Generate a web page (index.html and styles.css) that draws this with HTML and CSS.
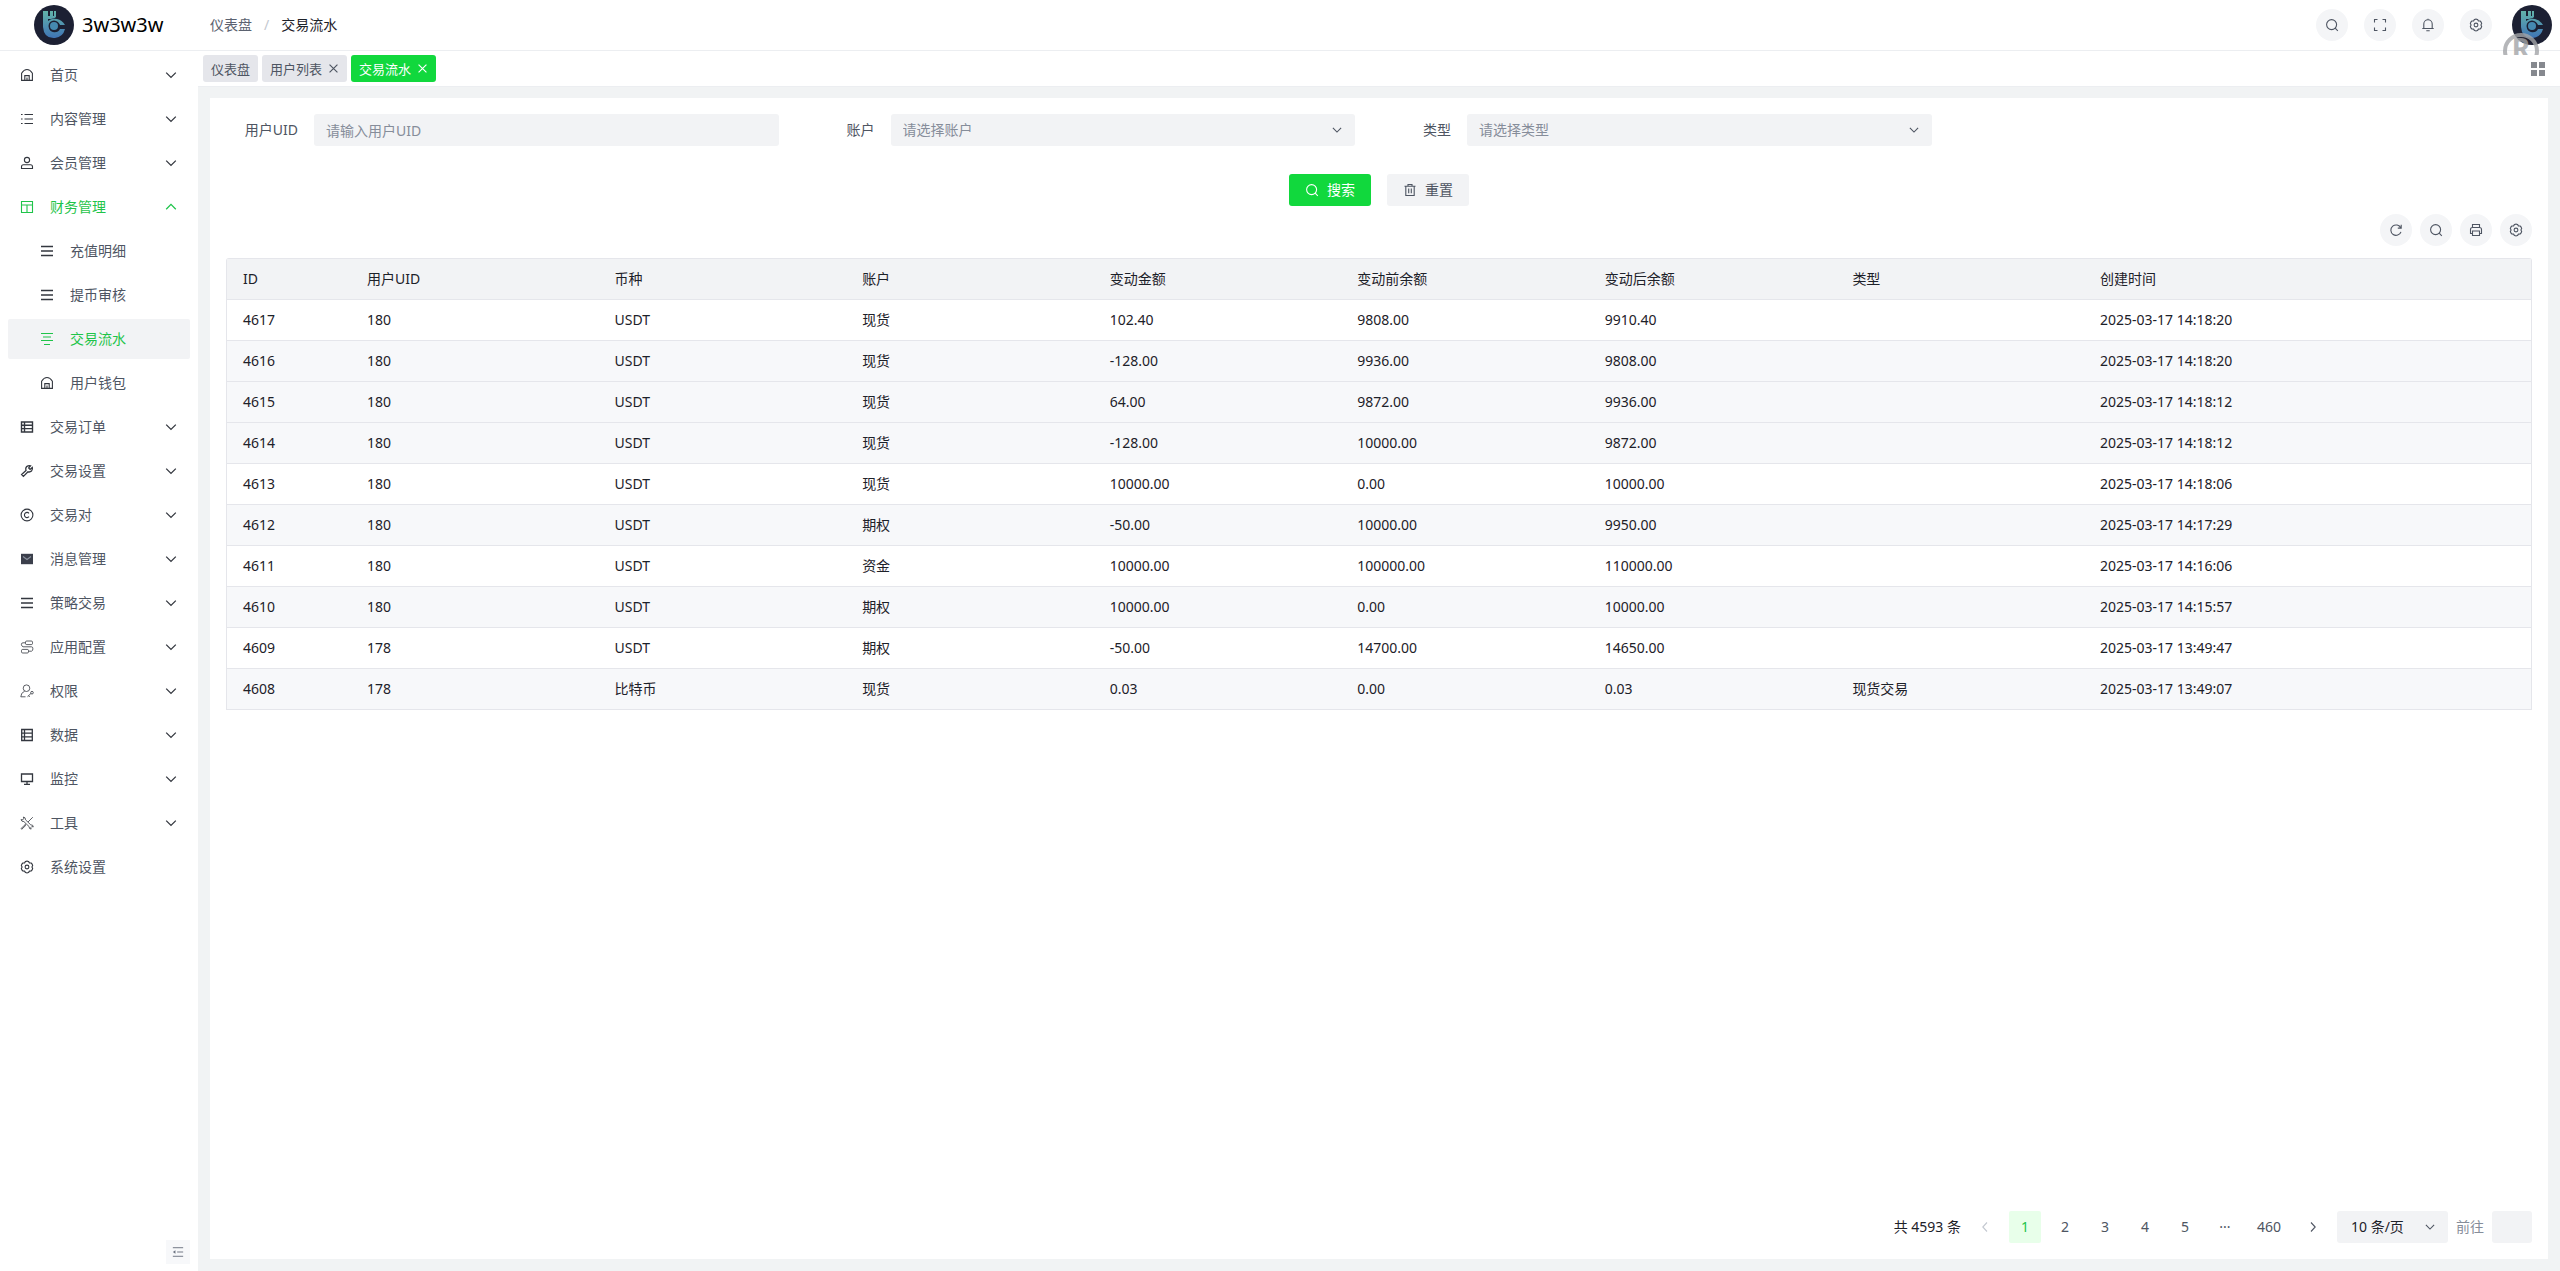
FILE: index.html
```html
<!DOCTYPE html>
<html lang="zh-CN">
<head>
  <meta charset="UTF-8">
  <meta name="viewport" content="width=device-width, initial-scale=1.0">
  <title>交易流水</title>
  <link rel="stylesheet" href="styles.css">
</head>
<body>
  <svg class="sprite" aria-hidden="true">
    <defs>
      <linearGradient id="logo-fill" x1="0" y1="0" x2="0" y2="1">
        <stop offset="0" stop-color="#62b3aa"/>
        <stop offset="1" stop-color="#3f74b5"/>
      </linearGradient>
    </defs>
    <symbol id="i-logo" viewBox="0 0 40 40">
      <circle cx="20" cy="20" r="20" fill="#1c2033"/>
      <path fill="url(#logo-fill)" d="M9 6h5v5h2V6h3v5h1V6h2v6q-2 2-8 2v2q4-3 9-2 5 1 8 6h-5q-2-4-7-3-4 1-4 5t4 5q5 1 7-3h5q-2 8-10 9-11 1-12-11z"/>
      <circle cx="20" cy="21" r="5.500" fill="#1c2033"/>
      <circle cx="20" cy="21" r="4" fill="#4589b0"/>
    </symbol>
    <symbol id="i-home" viewBox="0 0 14 14"><path d="M1.600 12.400V5.200Q4 1.500 7 1.500t5.400 3.700v7.200zM4.800 12.400V7.600h4.400v4.800M7 9.500v3"/></symbol>
    <symbol id="i-list" viewBox="0 0 14 14"><path d="M4.500 2.500H13M4.500 7H13M4.500 11.500H13M1 2.500h1.600M1 7h1.600M1 11.500h1.600"/></symbol>
    <symbol id="i-user" viewBox="0 0 14 14"><circle cx="7" cy="4" r="2.600"/><path d="M1.500 12.500v-1.800q0-2 2-2h7q2 0 2 2v1.800z"/></symbol>
    <symbol id="i-layout" viewBox="0 0 14 14"><path d="M1.500 1.500h11v11h-11zM1.500 5h11M7 5v7.500"/></symbol>
    <symbol id="i-menu" viewBox="0 0 14 14"><path stroke-width="1.500" d="M1 2.500h12M1 7h12M1 11.500h12"/></symbol>
    <symbol id="i-flow" viewBox="0 0 14 14"><path d="M1 1.500h12M3 5h8M1 8.500h12M4 12.500h6"/></symbol>
    <symbol id="i-table" viewBox="0 0 14 14"><path stroke-width="1.400" d="M1.500 2h11v10h-11zM1.500 5.300h11M1.500 8.600h11M4.500 2v10"/></symbol>
    <symbol id="i-tool" viewBox="0 0 14 14"><path stroke-width="1.300" d="M6 6.500Q5 3 8 1.800q1.400-.5 2.600 0L8.700 3.900l1.400 1.500 2.200-1.900q.6 2-.8 3.500-1.500 1.400-3.500.8l-4.600 4.600-1.800-1.800z"/></symbol>
    <symbol id="i-copyright" viewBox="0 0 14 14"><circle cx="7" cy="7" r="5.900"/><path d="M9 5.300a2.600 2.600 0 1 0 0 3.400"/></symbol>
    <symbol id="i-mail" viewBox="0 0 14 14"><path d="M1 1.800h12v10.400H1z" fill="#3b3f4b" stroke="none"/><path stroke="#8d93a0" d="M3 4.500l4 3 4-3"/></symbol>
    <symbol id="i-config" viewBox="0 0 14 14"><rect x="5.500" y="1" width="7" height="3.600" rx="1.200"/><rect x="1.500" y="9.400" width="7" height="3.600" rx="1.200"/><path d="M5.500 2.800H3Q1.400 2.800 1.400 4.400T3 6.800h8.500q1.400 0 1.400 2t-1.400 2.400h-3"/></symbol>
    <symbol id="i-auth" viewBox="0 0 14 14"><circle cx="6.500" cy="4.200" r="3.300"/><path d="M4.600 7.200Q.8 8.800.8 12.800h4.700M7.500 12.700l3.500-3.300M8.500 11.700l1.300 1.300"/><circle cx="12" cy="8.700" r="1.300"/></symbol>
    <symbol id="i-data" viewBox="0 0 14 14"><path stroke-width="1.300" d="M1.700 1.500h10.600v11H1.700zM1.700 5.200h10.600M1.700 8.800h10.600M4.500 1.500v11"/></symbol>
    <symbol id="i-monitor" viewBox="0 0 14 14"><path stroke-width="1.300" d="M1.500 2h11v7.500h-11zM7 9.500v2.500M4 12.300h6"/></symbol>
    <symbol id="i-tools" viewBox="0 0 14 14"><path d="M1 3.600l1.800.2.900-1L3.400 1q2.300.3 2.100 2.800l5.300 5.100q2.400-.3 2.500 2l-1.500-.3-1 1 .3 1.500q-2.200-.1-2-2.500L3.900 5.600Q1.500 5.800 1 3.600zM12.800 1.200L8 6M6 7.800L4.600 9.200M4.800 9L1 12.600l.7.700 3.900-3.700z"/></symbol>
    <symbol id="i-gear" viewBox="0 0 14 14"><circle cx="7" cy="7" r="1.900"/><path stroke-linejoin="round" d="M5.500 1.400Q7 .9 8.500 1.400l.9 1.500 1.800.1q1.100.9 1.500 2.600l-.8 1.400.8 1.400q-.4 1.700-1.500 2.600l-1.800.1-.9 1.500q-1.500.5-3 0l-.9-1.500-1.800-.1Q1.700 10.100 1.300 8.400L2.100 7l-.8-1.400Q1.700 3.900 2.800 3l1.800-.1z"/></symbol>
    <symbol id="i-down" viewBox="0 0 14 14"><path stroke-width="1.300" d="M2.200 4.600L7 9.400l4.800-4.800"/></symbol>
    <symbol id="i-up" viewBox="0 0 14 14"><path stroke-width="1.300" d="M2.200 9.200L7 4.400l4.800 4.800"/></symbol>
    <symbol id="i-left" viewBox="0 0 14 14"><path d="M9 2.500L4.800 7 9 11.500"/></symbol>
    <symbol id="i-right" viewBox="0 0 14 14"><path d="M5 2.500L9.200 7 5 11.500"/></symbol>
    <symbol id="i-close" viewBox="0 0 14 14"><path stroke-width="1.500" d="M2 2l10 10M12 2L2 12"/></symbol>
    <symbol id="i-search" viewBox="0 0 14 14"><circle cx="6.600" cy="6.600" r="5"/><path d="M10.200 10.200l2.600 2.600"/></symbol>
    <symbol id="i-full" viewBox="0 0 14 14"><path d="M1.500 4.500v-3h3M9.500 1.500h3v3M12.500 9.500v3h-3M4.500 12.500h-3v-3"/></symbol>
    <symbol id="i-bell" viewBox="0 0 14 14"><path d="M2.800 10.500V6a4.200 4.200 0 0 1 8.400 0v4.500M1.300 10.500h11.400M5.300 12.700h3.400M7 .8v1"/></symbol>
    <symbol id="i-refresh" viewBox="0 0 14 14"><path d="M11.800 5A5.200 5.200 0 1 0 12 8.800M12.200 1.800v3.300H8.800"/></symbol>
    <symbol id="i-print" viewBox="0 0 14 14"><path d="M3.500 4.500v-3h7v3M3.500 10.500h-2v-4q0-2 2-2h7q2 0 2 2v4h-2M3.500 8h7v4.500h-7z"/></symbol>
    <symbol id="i-trash" viewBox="0 0 14 14"><path d="M1.500 3.200h11M5 3V1.500h4V3M2.800 3.200v9.300h8.400V3.200M5.700 5.500v4.800M8.300 5.500v4.800"/></symbol>
    <symbol id="i-fold" viewBox="0 0 14 14"><path d="M1 2h12M6 7h7M1 12h12"/><path d="M1 7l3-2v4z" fill="currentColor" stroke="none"/></symbol>
    <symbol id="i-grid" viewBox="0 0 14 14"><path d="M0 0h6v6H0zM8 0h6v6H8zM0 8h6v6H0zM8 8h6v6H8z" fill="currentColor" stroke="none"/></symbol>
  </svg>

  <header class="header">
    <a class="brand" href="#"><svg class="avatar"><use href="#i-logo"/></svg><span>3w3w3w</span></a>
    <nav class="breadcrumb"><a href="#">仪表盘</a><i>/</i><strong>交易流水</strong></nav>
    <div class="header-tools">
      <button class="round" aria-label="搜索"><svg class="icon"><use href="#i-search"/></svg></button>
      <button class="round" aria-label="全屏"><svg class="icon"><use href="#i-full"/></svg></button>
      <button class="round" aria-label="通知"><svg class="icon"><use href="#i-bell"/></svg></button>
      <button class="round" aria-label="设置"><svg class="icon"><use href="#i-gear"/></svg></button>
      <a class="profile" href="#" aria-label="账号"><svg class="avatar"><use href="#i-logo"/></svg></a>
    </div>
    <div class="mark"><span>R</span></div>
  </header>

  <div class="layout">
    <aside class="sidebar">
      <nav class="menu" id="menu"></nav>
      <button class="fold" aria-label="收起"><svg class="icon"><use href="#i-fold"/></svg></button>
    </aside>

    <div class="main">
      <div class="tabs">
        <a class="tab" href="#">仪表盘</a>
        <a class="tab" href="#">用户列表<svg class="icon"><use href="#i-close"/></svg></a>
        <a class="tab active" href="#">交易流水<svg class="icon"><use href="#i-close"/></svg></a>
        <button class="tab-menu" aria-label="标签菜单"><svg class="icon"><use href="#i-grid"/></svg></button>
      </div>

      <main class="panel">
        <form class="search-form" onsubmit="return false">
          <div class="field">
            <label for="uid">用户UID</label>
            <input class="control" id="uid" type="text" placeholder="请输入用户UID">
          </div>
          <div class="field">
            <label for="account">账户</label>
            <div class="select">
              <select class="control" id="account"><option>请选择账户</option><option>现货</option><option>期权</option><option>资金</option></select>
              <svg class="icon"><use href="#i-down"/></svg>
            </div>
          </div>
          <div class="field">
            <label for="type">类型</label>
            <div class="select">
              <select class="control" id="type"><option>请选择类型</option><option>现货交易</option></select>
              <svg class="icon"><use href="#i-down"/></svg>
            </div>
          </div>
          <div class="actions">
            <button class="btn primary" type="submit"><svg class="icon"><use href="#i-search"/></svg>搜索</button>
            <button class="btn" type="reset"><svg class="icon"><use href="#i-trash"/></svg>重置</button>
          </div>
        </form>

        <div class="table-tools">
          <button class="round" aria-label="刷新"><svg class="icon"><use href="#i-refresh"/></svg></button>
          <button class="round" aria-label="搜索栏"><svg class="icon"><use href="#i-search"/></svg></button>
          <button class="round" aria-label="打印"><svg class="icon"><use href="#i-print"/></svg></button>
          <button class="round" aria-label="列设置"><svg class="icon"><use href="#i-gear"/></svg></button>
        </div>

        <div class="table-box">
          <table>
            <thead>
              <tr>
                <th class="col-id">ID</th><th>用户UID</th><th>币种</th><th>账户</th><th>变动金额</th>
                <th>变动前余额</th><th>变动后余额</th><th>类型</th><th class="col-time">创建时间</th>
              </tr>
            </thead>
            <tbody id="rows"></tbody>
          </table>
        </div>

        <div class="pager">
          <span class="total">共 4593 条</span>
          <button class="page off" aria-label="上一页" disabled><svg class="icon"><use href="#i-left"/></svg></button>
          <button class="page current">1</button>
          <button class="page">2</button>
          <button class="page">3</button>
          <button class="page">4</button>
          <button class="page">5</button>
          <span class="page">···</span>
          <button class="page">460</button>
          <button class="page" aria-label="下一页"><svg class="icon"><use href="#i-right"/></svg></button>
          <div class="select size">
            <select class="control" aria-label="每页条数"><option>10 条/页</option><option>20 条/页</option></select>
            <svg class="icon"><use href="#i-down"/></svg>
          </div>
          <label class="goto" for="goto">前往</label>
          <input class="control goto-input" id="goto" type="text">
        </div>
      </main>
    </div>
  </div>

  <script>
    // icon, title, kind: "" = group, "open" = expanded group, "sub" = child, "leaf" = no arrow
    const menu = [
      ["home", "首页", ""],
      ["list", "内容管理", ""],
      ["user", "会员管理", ""],
      ["layout", "财务管理", "open"],
      ["menu", "充值明细", "sub"],
      ["menu", "提币审核", "sub"],
      ["flow", "交易流水", "sub active"],
      ["home", "用户钱包", "sub"],
      ["table", "交易订单", ""],
      ["tool", "交易设置", ""],
      ["copyright", "交易对", ""],
      ["mail", "消息管理", ""],
      ["menu", "策略交易", ""],
      ["config", "应用配置", ""],
      ["auth", "权限", ""],
      ["data", "数据", ""],
      ["monitor", "监控", ""],
      ["tools", "工具", ""],
      ["gear", "系统设置", "leaf"]
    ];

    const thin = ["config", "auth", "tools"];
    const current = 4615;

    const rows = [
      [4617, 180, "USDT", "现货", "102.40", "9808.00", "9910.40", "", "2025-03-17 14:18:20"],
      [4616, 180, "USDT", "现货", "-128.00", "9936.00", "9808.00", "", "2025-03-17 14:18:20"],
      [4615, 180, "USDT", "现货", "64.00", "9872.00", "9936.00", "", "2025-03-17 14:18:12"],
      [4614, 180, "USDT", "现货", "-128.00", "10000.00", "9872.00", "", "2025-03-17 14:18:12"],
      [4613, 180, "USDT", "现货", "10000.00", "0.00", "10000.00", "", "2025-03-17 14:18:06"],
      [4612, 180, "USDT", "期权", "-50.00", "10000.00", "9950.00", "", "2025-03-17 14:17:29"],
      [4611, 180, "USDT", "资金", "10000.00", "100000.00", "110000.00", "", "2025-03-17 14:16:06"],
      [4610, 180, "USDT", "期权", "10000.00", "0.00", "10000.00", "", "2025-03-17 14:15:57"],
      [4609, 178, "USDT", "期权", "-50.00", "14700.00", "14650.00", "", "2025-03-17 13:49:47"],
      [4608, 178, "比特币", "现货", "0.03", "0.00", "0.03", "现货交易", "2025-03-17 13:49:07"]
    ];

    const icon = name => `<svg class="icon ${thin.includes(name) ? "thin" : ""}"><use href="#i-${name}"/></svg>`;

    document.getElementById("menu").innerHTML = menu.map(([name, title, kind]) => {
      let arrow = "";
      if (kind === "") arrow = icon("down");
      if (kind === "open") arrow = icon("up");
      return `<a class="menu-item ${kind}" href="#">${icon(name)}<span>${title}</span>${arrow}</a>`;
    }).join("");

    document.getElementById("rows").innerHTML = rows.map(row =>
      `<tr class="${row[0] === current ? "hover" : ""}">${row.map(cell => `<td>${cell}</td>`).join("")}</tr>`
    ).join("");
  </script>
</body>
</html>
```
FILE: styles.css
```css
* {
  box-sizing: border-box;
}
body {
  margin: 0;
  height: 100vh;
  display: flex;
  flex-direction: column;
  font-family: "Noto Sans", "Noto Sans CJK SC", sans-serif;
  font-size: 14px;
  line-height: 20px;
  color: #1d2129;
  background: #fff;
}
a {
  color: inherit;
  text-decoration: none;
}
button, input, select {
  font: inherit;
  color: inherit;
  border: none;
  margin: 0;
}
button {
  padding: 0;
  background: none;
  cursor: pointer;
}
.sprite {
  position: absolute;
  width: 0;
  height: 0;
}
.icon {
  width: 14px;
  height: 14px;
  flex: none;
  fill: none;
  stroke: currentColor;
  stroke-width: 1.1;
}
.icon.thin {
  stroke-width: .8;
}
.avatar {
  width: 40px;
  height: 40px;
  display: block;
}

/* header */
.header {
  position: relative;
  height: 51px;
  flex: none;
  display: flex;
  align-items: center;
  border-bottom: 1px solid #eceef1;
  padding-right: 8px;
}
.brand {
  width: 210px;
  padding-left: 34px;
  display: flex;
  align-items: center;
  gap: 8px;
  font-size: 20px;
  color: #000;
}
.breadcrumb {
  display: flex;
  gap: 12px;
  color: #5b6270;
}
.breadcrumb i {
  font-style: normal;
  color: #c3c8d0;
}
.breadcrumb strong {
  font-weight: 400;
  color: #1d2129;
}
.header-tools {
  margin-left: auto;
  display: flex;
  align-items: center;
  gap: 16px;
}
.profile {
  margin-left: 4px;
}
.round {
  width: 32px;
  height: 32px;
  border-radius: 50%;
  background: #f4f5f7;
  color: #4e5562;
  display: flex;
  align-items: center;
  justify-content: center;
}
/* half hidden badge under the avatar */
.mark {
  position: absolute;
  right: 21px;
  top: 33px;
  width: 36px;
  height: 22px;
  overflow: hidden;
  color: #a3a5a8;
  opacity: .8;
}
.mark span {
  display: block;
  height: 36px;
  border: 4px solid;
  border-radius: 50%;
  text-align: center;
  font-size: 28px;
  font-weight: 700;
  line-height: 22px;
}

/* sidebar */
.layout {
  flex: 1;
  min-height: 0;
  display: flex;
}
.sidebar {
  width: 198px;
  flex: none;
  display: flex;
  flex-direction: column;
  padding: 4px 8px 7px;
}
.menu {
  display: flex;
  flex-direction: column;
  gap: 4px;
}
.menu-item {
  height: 40px;
  padding: 0 12px;
  display: flex;
  align-items: center;
  border-radius: 2px;
  color: #4e5562;
}
.menu-item .icon {
  color: #33373f;
}
.menu-item span {
  flex: 1;
  margin-left: 16px;
}
.menu-item.sub {
  padding-left: 32px;
}
.menu-item.active {
  background: #f2f3f5;
}
.menu-item.open, .menu-item.open .icon,
.menu-item.active, .menu-item.active .icon {
  color: #1fc44a;
}
.fold {
  margin-top: auto;
  align-self: flex-end;
  width: 24px;
  height: 24px;
  background: #f7f8fa;
  color: #6b7280;
  display: flex;
  align-items: center;
  justify-content: center;
}
.fold .icon {
  width: 12px;
  height: 12px;
}

/* tabs */
.main {
  flex: 1;
  min-width: 0;
  display: flex;
  flex-direction: column;
  background: #f1f3f4;
}
.tabs {
  height: 36px;
  flex: none;
  display: flex;
  align-items: center;
  gap: 4px;
  padding: 0 15px 0 5px;
  background: #fff;
  border-bottom: 1px solid #eceef1;
  font-size: 13px;
}
.tab {
  height: 27px;
  padding: 0 8px;
  display: flex;
  align-items: center;
  gap: 6px;
  border-radius: 3px;
  background: #e5e6eb;
  color: #4e5562;
}
.tab .icon {
  width: 11px;
  height: 11px;
}
.tab.active {
  background: #11d83d;
  color: #fff;
}
.tab-menu {
  margin-left: auto;
  height: 14px;
  display: flex;
  color: #86898f;
}

/* content */
.panel {
  flex: 1;
  margin: 11px 12px 12px;
  padding: 16px;
  display: flex;
  flex-direction: column;
  background: #fff;
}
.search-form {
  display: grid;
  grid-template-columns: repeat(4, 1fr);
  row-gap: 28px;
}
.field {
  display: flex;
  align-items: center;
  padding-right: 24px;
  color: #4e5562;
}
.field label {
  width: 88px;
  padding-right: 16px;
  flex: none;
  text-align: right;
}
.control {
  width: 100%;
  height: 32px;
  padding: 0 12px;
  border-radius: 3px;
  background: #f2f3f5;
  outline: none;
  appearance: none;
}
.control::placeholder {
  color: #868d9a;
  opacity: 1;
}
.field select {
  color: #868d9a;
}
.select {
  position: relative;
  flex: 1;
}
.select .icon {
  position: absolute;
  right: 12px;
  top: 10px;
  width: 12px;
  height: 12px;
  color: #4e5562;
  pointer-events: none;
}
.actions {
  grid-column: 1 / -1;
  display: flex;
  justify-content: center;
  gap: 16px;
}
.btn {
  height: 32px;
  padding: 0 16px;
  display: flex;
  align-items: center;
  gap: 8px;
  border-radius: 3px;
  background: #f2f3f5;
  color: #4e5562;
}
.btn.primary {
  background: #11d83d;
  color: #fff;
}
.table-tools {
  display: flex;
  justify-content: flex-end;
  gap: 8px;
  margin: 8px 0 12px;
}
.table-box {
  border: 1px solid #e5e6eb;
  border-bottom: none;
  border-radius: 3px 3px 0 0;
}
table {
  width: 100%;
  table-layout: fixed;
  border-collapse: separate;
  border-spacing: 0;
}
th, td {
  height: 41px;
  padding: 0 16px;
  text-align: left;
  font-weight: 400;
  white-space: nowrap;
  border-bottom: 1px solid #e5e6eb;
}
th {
  background: #f2f3f5;
}
.col-id {
  width: 124px;
}
.col-time {
  width: 19.4%;
}
tbody tr:nth-child(even), tbody tr.hover, tbody tr:hover {
  background: #f7f8fa;
}

/* pager */
.pager {
  margin-top: auto;
  display: flex;
  justify-content: flex-end;
  align-items: center;
  gap: 8px;
}
.page {
  min-width: 32px;
  height: 32px;
  padding: 0 8px;
  display: flex;
  align-items: center;
  justify-content: center;
  border-radius: 2px;
  color: #4e5562;
}
.page.current {
  background: #e8ffea;
  color: #1fc44a;
}
.page.off {
  color: #c3c8d0;
}
.select.size {
  flex: none;
  width: 111px;
}
.size .control {
  padding: 0 14px;
}
.goto {
  color: #868d9a;
}
.goto-input {
  width: 40px;
}
```
